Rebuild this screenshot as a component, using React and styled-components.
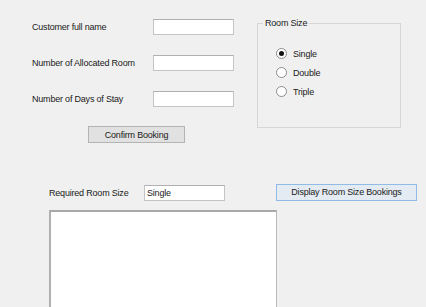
import React from "react";
import styled, { createGlobalStyle } from "styled-components";

const Global = createGlobalStyle`
  html, body { margin: 0; padding: 0; background: #f0f0f0; overflow: hidden; }
  body { font-family: "Liberation Sans", Arial, sans-serif; font-size: 9px; color: #1a1a1a; }
`;

const Window = styled.div`
  width: 426px;
  height: 307px;
  background: #f0f0f0;
  overflow: hidden;
`;

const TopRow = styled.div`
  display: flex;
  align-items: flex-start;
  padding: 19px 0 0 32px;
`;

const Form = styled.div`
  display: grid;
  grid-template-columns: 121px 81px;
  row-gap: 20px;
  align-items: center;
`;

const Label = styled.span`
  font-size: 9px;
  letter-spacing: -0.2px;
  white-space: nowrap;
  line-height: 11px;
`;

const TextBox = styled.div`
  box-sizing: border-box;
  width: ${(p) => p.$w || 81}px;
  height: 16px;
  background: #fff;
  border: 1px solid #c4c4c4;
  border-top-color: #b0b0b0;
  font-size: 9px;
  letter-spacing: -0.2px;
  line-height: 14px;
  padding-left: 2px;
`;

const Button = styled.button`
  box-sizing: border-box;
  width: ${(p) => p.$w}px;
  height: ${(p) => p.$h}px;
  margin: 0;
  padding: 0;
  font-family: "Liberation Sans", Arial, sans-serif;
  font-size: 9px;
  letter-spacing: -0.2px;
  color: #1a1a1a;
  background: ${(p) => (p.$focus ? "#e4ebf2" : "#e1e1e1")};
  border: 1px solid ${(p) => (p.$focus ? "#8fbbe6" : "#b4b4b4")};
`;

const ConfirmWrap = styled.div`
  grid-column: 1 / span 2;
  padding-left: 56px;
  margin-top: -1px;
`;

const Group = styled.fieldset`
  box-sizing: border-box;
  margin: 0 0 0 23px;
  padding: 0;
  width: 144px;
  height: 110px;
  border: 1px solid #d6d6d6;
  position: relative;
  top: -1px;
`;

const Legend = styled.legend`
  margin-left: 5px;
  padding: 0 2px;
  font-size: 9px;
  letter-spacing: -0.2px;
  line-height: 11px;
`;

const RadioList = styled.div`
  display: flex;
  flex-direction: column;
  gap: 8px;
  padding: 19px 0 0 18px;
`;

const RadioRow = styled.label`
  display: flex;
  align-items: center;
  gap: 6px;
  height: 11px;
  font-size: 9px;
  letter-spacing: -0.2px;
`;

const RadioCircle = styled.span`
  box-sizing: border-box;
  width: 11px;
  height: 11px;
  border-radius: 50%;
  border: 1px solid #8c8c8c;
  background: #fff;
  display: flex;
  align-items: center;
  justify-content: center;
  &::after {
    content: "";
    width: 5px;
    height: 5px;
    border-radius: 50%;
    background: ${(p) => (p.$checked ? "#111" : "transparent")};
  }
`;

const Bottom = styled.div`
  padding: 42px 0 0 49px;
`;

const BottomRow = styled.div`
  display: flex;
  align-items: center;
`;

const BottomLabel = styled(Label)`
  width: 95px;
`;

const ButtonSlot = styled.div`
  margin-left: 51px;
  margin-top: -2px;
`;

const ListBox = styled.div`
  box-sizing: border-box;
  width: 228px;
  height: 120px;
  margin-top: 9px;
  background: #fff;
  border: 1px solid #b8b8b8;
  border-top: 2px solid #a8a8a8;
  border-left: 2px solid #b0b0b0;
`;

const Radio = ({ checked, children }) => (
  <RadioRow>
    <RadioCircle $checked={checked} />
    {children}
  </RadioRow>
);

export default function App() {
  return (
    <Window>
      <Global />
      <TopRow>
        <Form>
          <Label>Customer full name</Label>
          <TextBox />
          <Label>Number of Allocated Room</Label>
          <TextBox />
          <Label>Number of Days of Stay</Label>
          <TextBox />
          <ConfirmWrap>
            <Button $w={97} $h={17}>Confirm Booking</Button>
          </ConfirmWrap>
        </Form>
        <Group>
          <Legend>Room Size</Legend>
          <RadioList>
            <Radio checked>Single</Radio>
            <Radio>Double</Radio>
            <Radio>Triple</Radio>
          </RadioList>
        </Group>
      </TopRow>
      <Bottom>
        <BottomRow>
          <BottomLabel>Required Room Size</BottomLabel>
          <TextBox>Single</TextBox>
          <ButtonSlot>
            <Button $w={141} $h={17} $focus>Display Room Size Bookings</Button>
          </ButtonSlot>
        </BottomRow>
        <ListBox />
      </Bottom>
    </Window>
  );
}
